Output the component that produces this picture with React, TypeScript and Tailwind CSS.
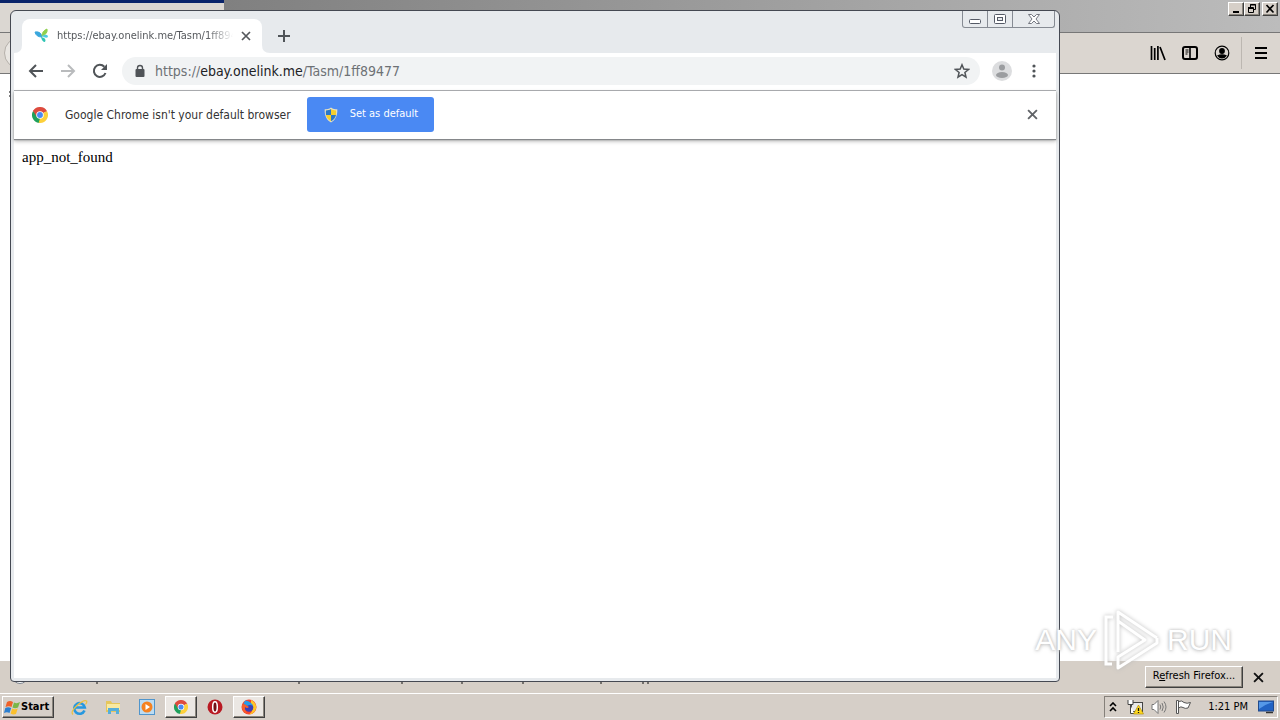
import type { ReactNode } from "react";

const uiFont = "font-['DejaVu_Sans_Condensed','DejaVu_Sans',sans-serif]";
const raised =
  "border border-t-white border-l-white border-r-[#404040] border-b-[#404040] shadow-[inset_-1px_-1px_0_#8a857d]";

function ChromeLogo({ size }: { size: number }) {
  return (
    <svg width={size} height={size} viewBox="0 0 24 24" aria-hidden="true">
      <path d="M12 12 L1.6 6 A12 12 0 0 1 22.4 6 Z" fill="#dd4b3e" />
      <path d="M12 12 L22.4 6 A12 12 0 0 1 12 24 Z" fill="#fdd03b" />
      <path d="M12 12 L12 24 A12 12 0 0 1 1.6 6 Z" fill="#1fa05c" />
      <path d="M12 6.5 H22.6 L22.4 6 H12 Z" fill="#dd4b3e" />
      <path d="M16.8 14.7 L12 24 L10 23.8 L12 17 Z" fill="#fdd03b" />
      <path d="M1.6 6 L7.2 14.8 L8.5 9 L3 4.2 Z" fill="#dd4b3e" />
      <circle cx="12" cy="12" r="5.6" fill="#fff" />
      <circle cx="12" cy="12" r="4.4" fill="#4a8af4" />
    </svg>
  );
}

function CloseIcon({ size, color }: { size: number; color: string }) {
  return (
    <svg width={size} height={size} viewBox="0 0 10 10" stroke={color} strokeWidth="1.7" aria-hidden="true">
      <path d="M1 1 L9 9 M9 1 L1 9" />
    </svg>
  );
}

function ShieldIcon() {
  return (
    <svg width="14" height="16" viewBox="0 0 14 16" aria-hidden="true">
      <path d="M7 0.5 C9 2 11 2.3 13.3 2.3 C13.7 9 11 13.5 7 15.5 C3 13.5 .3 9 .7 2.3 C3 2.3 5 2 7 .5 Z" fill="#e8e2c0" />
      <path d="M7 2 V8 H2 C1.8 6 1.8 5 1.9 3.4 C4 3.3 5.5 3 7 2 Z" fill="#2a77c9" />
      <path d="M7 2 C8.5 3 10 3.3 12.1 3.4 C12.2 5 12.2 6 12 8 H7 Z" fill="#f6cf2e" />
      <path d="M2 8 H7 V14.3 C4 12.7 2.5 10.5 2 8 Z" fill="#f6cf2e" />
      <path d="M12 8 H7 V14.3 C10 12.7 11.5 10.5 12 8 Z" fill="#2a77c9" />
    </svg>
  );
}

function FirefoxWindow() {
  return (
    <div className="flex min-h-0 flex-1 flex-col bg-white">
      <div className="flex h-[33px] shrink-0 border-b border-[#777]">
        <div className="w-56 border-t-[3px] border-[#0a246a] bg-[#dbd7d2]" />
        <div className="flex flex-1 items-start justify-end bg-linear-to-r from-[#808080] to-[#bcbcbc] pt-[2px] pr-[2px]">
          <button aria-label="Minimize Firefox" className={`h-[14px] w-4 bg-[#d6cfc8] ${raised}`}>
            <svg width="14" height="12" viewBox="0 0 14 12"><path d="M4 9 H10" stroke="#000" strokeWidth="2" /></svg>
          </button>
          <button aria-label="Restore Firefox" className={`h-[14px] w-4 bg-[#d6cfc8] ${raised}`}>
            <svg width="14" height="12" viewBox="0 0 14 12" fill="none" stroke="#000">
              <path d="M5.5 4 V1.5 H10.5 V6.5 H9 M5 2 H11 M3.5 5 V9.5 H8.5 V4.5 H3 M3 5.5 H9" />
            </svg>
          </button>
          <button aria-label="Close Firefox" className={`ml-[2px] h-[14px] w-4 bg-[#d6cfc8] ${raised}`}>
            <svg width="14" height="12" viewBox="0 0 14 12"><path d="M3.5 2 L10.5 9.5 M10.5 2 L3.5 9.5" stroke="#000" strokeWidth="1.7" /></svg>
          </button>
        </div>
      </div>

      <div className="flex h-[41px] shrink-0 items-center border-b border-[#777] bg-[#dbd6d0]">
        <button aria-label="Back" className="ml-1 size-8 rounded-full border border-[#b5b0aa] bg-[#e9e6e2]" />
        <div className="flex-1" />
        <button aria-label="Library" className="mr-4">
          <svg width="16" height="16" viewBox="0 0 16 16" stroke="#000" strokeWidth="1.7">
            <path d="M1.5 1 V15 M4.7 3 V15 M7.9 1 V15 M10 2 L15 15" />
          </svg>
        </button>
        <button aria-label="Sidebars" className="mr-4">
          <svg width="16" height="16" viewBox="0 0 16 16" fill="none" stroke="#000">
            <rect x="1" y="2" width="14" height="12" rx="2" strokeWidth="2" />
            <path d="M8 2 V14" strokeWidth="1.6" />
            <path d="M3.5 5 H6.5 M3.5 7 H6.5 M3.5 9 H5.5" />
          </svg>
        </button>
        <button aria-label="Account" className="mr-[11px]">
          <svg width="16" height="16" viewBox="0 0 16 16">
            <circle cx="8" cy="8" r="6.8" fill="none" stroke="#000" strokeWidth="1.2" />
            <circle cx="8" cy="6" r="2.9" />
            <path d="M3 10.5 Q8 8 13 10.5 Q11 13.6 8 13.6 Q5 13.6 3 10.5 Z" />
          </svg>
        </button>
        <div className="h-8 w-px bg-[#bcb7b1]" />
        <button aria-label="Open menu" className="mr-3 ml-3">
          <svg width="14" height="14" viewBox="0 0 14 14" stroke="#000" strokeWidth="2">
            <path d="M1 2 H13 M1 7 H13 M1 12 H13" />
          </svg>
        </button>
      </div>

      <div className="flex-1 pt-[17px] pl-2">
        <svg width="3" height="6" viewBox="0 0 3 6"><path d="M1 1 H3 M1 5 H3" stroke="#000" /></svg>
      </div>

      <div className="flex h-8 shrink-0 items-center justify-between bg-[#d6cfc7] pr-4">
        <svg width="680" height="32" viewBox="0 0 680 32" aria-hidden="true">
          <circle cx="20" cy="15" r="7.5" fill="#fff" stroke="#7d8590" />
          <path
            d="M97 21 v2 M299 21 v2 M402 21 v2 M462 21 v2 M523 21 v2 M601 21 v2 M643 21 v2 M648 21 v2"
            stroke="#111"
          />
        </svg>
        <div className="flex items-center gap-[10px]">
          <button className={`mb-px h-[22px] w-[98px] bg-[#d6cfc7] text-[11px] whitespace-nowrap ${raised}`}>
            R<u>e</u>fresh Firefox...
          </button>
          <button aria-label="Dismiss notification">
            <CloseIcon size={11} color="#111" />
          </button>
        </div>
      </div>
    </div>
  );
}

function WindowControls() {
  return (
    <div className="mr-px flex h-[17px] rounded-b-[3px] border border-t-0 border-[#868b93]">
      <button aria-label="Minimize" className="flex w-[25px] justify-center border-r border-[#868b93]">
        <svg width="14" height="16" viewBox="0 0 14 16"><rect x="1.5" y="8.5" width="11" height="4" rx="1" fill="#fff" stroke="#555a66" /></svg>
      </button>
      <button aria-label="Maximize" className="flex w-[25px] justify-center border-r border-[#868b93]">
        <svg width="14" height="16" viewBox="0 0 14 16" stroke="#555a66">
          <rect x="1.5" y="3.5" width="11" height="9" rx="1" fill="#fff" />
          <rect x="4.5" y="6.5" width="5" height="3" fill="#e7eaed" />
        </svg>
      </button>
      <button aria-label="Close" className="flex w-[41px] justify-center">
        <svg width="14" height="16" viewBox="0 0 14 16">
          <path d="M1.5 3.5 H4.5 L7 6 L9.5 3.5 H12.5 L9 8 L12.5 12.5 H9.5 L7 10 L4.5 12.5 H1.5 L5 8 Z" fill="#fff" stroke="#666a74" strokeWidth=".9" />
        </svg>
      </button>
    </div>
  );
}

function TabStrip() {
  return (
    <div className="flex h-[42px] shrink-0 items-start justify-between">
      <div className="flex pt-2">
        <div className="flex">
          <svg className="mt-[26px]" width="8" height="8" viewBox="0 0 8 8"><path d="M8 0 V8 H0 Q8 8 8 0 Z" fill="#fff" /></svg>
          <div className="flex h-[34px] w-60 items-center rounded-t-lg bg-white pr-[10px] pl-3">
            <svg width="16" height="16" viewBox="0 0 16 16" aria-hidden="true">
              <path d="M1 4 Q7 3 8 9 Q2 9 1 4 Z" fill="#3aa7dd" stroke="#3aa7dd" />
              <path d="M13 1 Q14 6 8 8 Q8 3 13 1 Z" fill="#8fd04e" stroke="#8fd04e" />
              <path d="M8 8 Q14 5 14 9 Q12 11 8 8 Z" fill="#4dcbe2" />
              <path d="M7 9 Q13 10 11 14 Q8 14 7 9 Z" fill="#2fc4b4" />
            </svg>
            <span className="ml-[7px] w-44 overflow-hidden mask-r-from-85% text-[11px] whitespace-nowrap text-[#55585c]">
              https://ebay.onelink.me/Tasm/1ff89477
            </span>
            <button aria-label="Close tab" className="ml-2">
              <CloseIcon size={10} color="#55585c" />
            </button>
          </div>
          <svg className="mt-[26px]" width="8" height="8" viewBox="0 0 8 8"><path d="M0 0 V8 H8 Q0 8 0 0 Z" fill="#fff" /></svg>
        </div>
        <button aria-label="New tab" className="ml-2 h-[34px]">
          <svg width="12" height="12" viewBox="0 0 12 12" stroke="#505458" strokeWidth="2"><path d="M6 0 V12 M0 6 H12" /></svg>
        </button>
      </div>
      <WindowControls />
    </div>
  );
}

function Toolbar() {
  return (
    <div className="flex h-[38px] shrink-0 items-center border-b border-[#a9abae] bg-white pr-[14px] pb-px pl-[14px]">
      <button aria-label="Back" className="mr-4">
        <svg width="16" height="16" viewBox="0 0 16 16" fill="none" stroke="#505458" strokeWidth="2"><path d="M15 8 H2 M8 2 L2 8 L8 14" /></svg>
      </button>
      <button aria-label="Forward" className="mr-4">
        <svg width="16" height="16" viewBox="0 0 16 16" fill="none" stroke="#b9bbbd" strokeWidth="2"><path d="M1 8 H14 M8 2 L14 8 L8 14" /></svg>
      </button>
      <button aria-label="Reload" className="mr-[14px]">
        <svg width="16" height="16" viewBox="0 0 16 16" fill="none" stroke="#505458" strokeWidth="2">
          <path d="M13.5 10 A6 6 0 1 1 12.3 3.8" />
          <path d="M15 1 V7 H9 Z" fill="#505458" stroke="none" />
        </svg>
      </button>
      <div className="flex h-7 flex-1 items-center rounded-full bg-[#f1f3f4] pr-[10px] pl-3">
        <svg width="12" height="14" viewBox="0 0 12 14" aria-hidden="true">
          <rect x="1.5" y="5" width="9" height="8" rx="1" fill="#505458" />
          <path d="M3.5 6 V4 A2.5 2.5 0 0 1 8.5 4 V6" fill="none" stroke="#505458" strokeWidth="1.4" />
        </svg>
        <div className="ml-[9px] flex-1 text-[14px] text-[#6d7175]">
          https://<span className="text-[#202124]">ebay.onelink.me</span>/Tasm/1ff89477
        </div>
        <button aria-label="Bookmark this page">
          <svg width="16" height="16" viewBox="0 0 16 16" fill="none" stroke="#505458" strokeWidth="1.5">
            <path d="M8 1.8 L9.8 6.1 L14.5 6.5 L10.9 9.5 L12 14.1 L8 11.6 L4 14.1 L5.1 9.5 L1.5 6.5 L6.2 6.1 Z" />
          </svg>
        </button>
      </div>
      <button aria-label="Profile" className="ml-3">
        <svg width="20" height="20" viewBox="0 0 20 20">
          <circle cx="10" cy="10" r="10" fill="#dcdddf" />
          <circle cx="10" cy="6.5" r="3" fill="#9b9da0" />
          <ellipse cx="10" cy="14" rx="6" ry="3" fill="#9b9da0" />
        </svg>
      </button>
      <button aria-label="Customize and control" className="ml-[14px]">
        <svg width="16" height="16" viewBox="0 0 16 16" fill="#505458">
          <circle cx="8" cy="3" r="1.6" />
          <circle cx="8" cy="8" r="1.6" />
          <circle cx="8" cy="13" r="1.6" />
        </svg>
      </button>
    </div>
  );
}

function ChromeWindow() {
  return (
    <div className="absolute top-[10px] right-[220px] bottom-[38px] left-[10px] flex flex-col rounded-t-md rounded-b border border-[#454952] bg-[#e7eaed] px-[3px] pb-[3px]">
      <TabStrip />
      <Toolbar />
      <div className="z-10 flex h-12 shrink-0 items-center bg-white pr-[18px] pb-px pl-[18px] shadow-[0_1px_1px_#85878a,0_2px_4px_#aaa]">
        <ChromeLogo size={16} />
        <span className="ml-[17px] text-[12px] text-[#333]">Google Chrome isn't your default browser</span>
        <button className="ml-4 flex h-[35px] w-[127px] items-center rounded-[3px] bg-[#4a89f3] pl-[17px] text-[11px] text-white">
          <ShieldIcon />
          <span className="ml-3 whitespace-nowrap">Set as default</span>
        </button>
        <button aria-label="Dismiss" className="ml-auto">
          <CloseIcon size={11} color="#606367" />
        </button>
      </div>
      <main className="flex-1 bg-white p-2 font-['Liberation_Serif',serif] text-[15px] leading-5 text-black">
        <p>app_not_found</p>
      </main>
    </div>
  );
}

function Watermark() {
  return (
    <div className="pointer-events-none absolute right-12 bottom-12 flex items-center gap-[7px] font-['Liberation_Sans',sans-serif] text-[30px] leading-[64px] text-white [text-shadow:0_0_3px_#bbb,0_1px_4px_#ccc]">
      <span>ANY</span>
      <svg className="drop-shadow-[0_0_2px_#bbb]" width="56" height="64" viewBox="0 0 56 64" fill="none" stroke="#fff" strokeWidth="3">
        <path d="M14 44 V4 L53 30 M14 13 L41 32 L14 49 V60 L53 35 V30" strokeLinejoin="round" />
        <path d="M9 9 H2 V56 H8" />
      </svg>
      <span>RUN</span>
    </div>
  );
}

function TaskButton({ label, active, children }: { label: string; active?: boolean; children: ReactNode }) {
  return (
    <button
      aria-label={label}
      className={`flex h-[22px] w-8 items-center justify-center ${active ? `bg-[#ebe7e3] ${raised}` : ""}`}
    >
      {children}
    </button>
  );
}

function Taskbar() {
  return (
    <footer className="flex h-[27px] shrink-0 items-center border-t border-white bg-[#d6cfc8] pr-[2px] pl-[2px]">
      <button className={`flex h-[22px] w-[52px] items-center pl-px text-[11px] font-bold ${raised}`}>
        <svg width="17" height="17" viewBox="0 0 17 17" aria-hidden="true">
          <path d="M3 3 Q6 1 9 3 L7.5 8 Q5 6.5 1.5 8 Z" fill="#ef6129" />
          <path d="M10 3.5 Q13 5 16 3 L14 8.5 Q11 10 8.5 8.5 Z" fill="#7ab648" />
          <path d="M1.3 9 Q4 7.5 7.2 9 L5.5 14 Q3 12.5 0 14 Z" fill="#2b7fd0" />
          <path d="M8.2 9.5 Q11 11 13.7 9.5 L12 15 Q9 16 6.6 14.5 Z" fill="#fbc02d" />
        </svg>
        Start
      </button>
      <div className="ml-[9px] flex items-center gap-[2px]">
        <TaskButton label="Internet Explorer">
          <svg width="17" height="17" viewBox="0 0 17 17" fill="none">
            <path d="M13.5 11.5 A5.3 5.3 0 1 1 13.8 8.5 H4.5" stroke="#2798df" strokeWidth="2.6" />
            <path d="M2 15.5 Q-1 13 6 6.5 Q13 .5 15.5 2 Q16.5 3 14.5 5.5" stroke="#ecc140" strokeWidth="1.2" />
          </svg>
        </TaskButton>
        <TaskButton label="Windows Explorer">
          <svg width="16" height="16" viewBox="0 0 16 16">
            <path d="M1 2 H6 L7 4 H15 V13 H1 Z" fill="#e5c65c" />
            <path d="M2 5 H15 V11 H2 Z" fill="#f8e9a1" />
            <path d="M3 15 V9 H14 V15 H11 V12 H6 V15 Z" fill="#56aeda" />
          </svg>
        </TaskButton>
        <TaskButton label="Media Player">
          <svg width="16" height="16" viewBox="0 0 16 16">
            <rect x=".5" y=".5" width="15" height="15" fill="#bcdcf2" stroke="#5095cc" />
            <circle cx="8" cy="8" r="5.5" fill="#f58220" />
            <path d="M6.5 5 L11 8 L6.5 11 Z" fill="#fff" />
          </svg>
        </TaskButton>
        <TaskButton label="Google Chrome" active><ChromeLogo size={14} /></TaskButton>
        <TaskButton label="Opera">
          <svg width="16" height="16" viewBox="0 0 16 16">
            <circle cx="8" cy="8" r="7.5" fill="#b91922" />
            <ellipse cx="8" cy="8" rx="2.3" ry="5.2" fill="#731016" stroke="#fff" strokeWidth="1.5" />
          </svg>
        </TaskButton>
        <TaskButton label="Firefox" active>
          <svg width="16" height="16" viewBox="0 0 16 16">
            <circle cx="8" cy="8" r="7.5" fill="#f6412d" />
            <path d="M10 .8 Q16 4 15.2 9 Q14 15 8 15.5 Q14 11 10 6 Z" fill="#ffc528" />
            <circle cx="8" cy="8.5" r="4.3" fill="#3b3fb8" />
            <path d="M4 1.5 Q10 2 12 7 Q9 5 6 7 Q4 5 2.5 5 Z" fill="#279be8" />
            <path d="M1 5 Q5 5 8 8 Q6 10 4 8 Q3 13 8 15 Q0 14 1 5 Z" fill="#f7602c" />
          </svg>
        </TaskButton>
      </div>
      <div className="ml-auto flex h-[22px] items-center border border-t-[#85807a] border-r-white border-b-white border-l-[#85807a] pr-[3px] pl-1">
        <button aria-label="Show hidden icons" className="mr-[10px]">
          <svg width="8" height="10" viewBox="0 0 8 10" fill="none" stroke="#000" strokeWidth="1.6"><path d="M1 4 L4 1 L7 4 M1 9 L4 6 L7 9" /></svg>
        </button>
        <svg className="mr-[7px]" width="17" height="16" viewBox="0 0 17 16" aria-label="Network">
          <rect x="4.5" y="3.5" width="11" height="9" fill="#e9e9e9" stroke="#444" />
          <path d="M1 1 V5.5 H6 V1 M3.5 6 V14.5 H7" fill="#fff" stroke="#444" />
          <path d="M11.5 6 L16.5 15 H6.5 Z" fill="#ffd91f" stroke="#a98400" strokeWidth=".6" />
          <path d="M11.5 9 V12 M11.5 13 V14" stroke="#111" strokeWidth="1.3" />
        </svg>
        <svg className="mr-2" width="16" height="16" viewBox="0 0 16 16" fill="none" stroke="#777" aria-label="Volume">
          <path d="M1 5.5 H3 L7 1.5 V14.5 L3 10.5 H1 Z" fill="#fff" />
          <path d="M9 5.5 Q10.5 8 9 10.5 M11 4 Q13.5 8 11 12 M13 2.5 Q17 8 13 13.5" />
        </svg>
        <svg width="17" height="16" viewBox="0 0 17 16" fill="#fff" stroke="#555" aria-label="Action Center">
          <path d="M1.5 1.5 H3.5 V14.5 H1.5 Z M3.5 2.5 Q7 1 9 3.5 Q12 5 15.5 3.5 L13 9 Q10 10 8 8.5 Q6 7 3.5 9 Z" />
        </svg>
        <time className="mr-[10px] ml-4 text-[11px] whitespace-nowrap">1:21 PM</time>
        <button aria-label="Show desktop">
          <svg width="16" height="14" viewBox="0 0 16 14">
            <rect x=".5" y="1" width="15" height="10" fill="#2263c4" stroke="#224b8c" />
            <path d="M1 2 H15 Q8 4 1 9 Z" fill="#5598e8" />
            <path d="M8 12.5 H15" stroke="#333" strokeWidth="1.5" />
          </svg>
        </button>
      </div>
    </footer>
  );
}

export default function App() {
  return (
    <div className={`relative flex h-screen flex-col overflow-hidden text-black ${uiFont}`}>
      <FirefoxWindow />
      <Taskbar />
      <ChromeWindow />
      <Watermark />
    </div>
  );
}
